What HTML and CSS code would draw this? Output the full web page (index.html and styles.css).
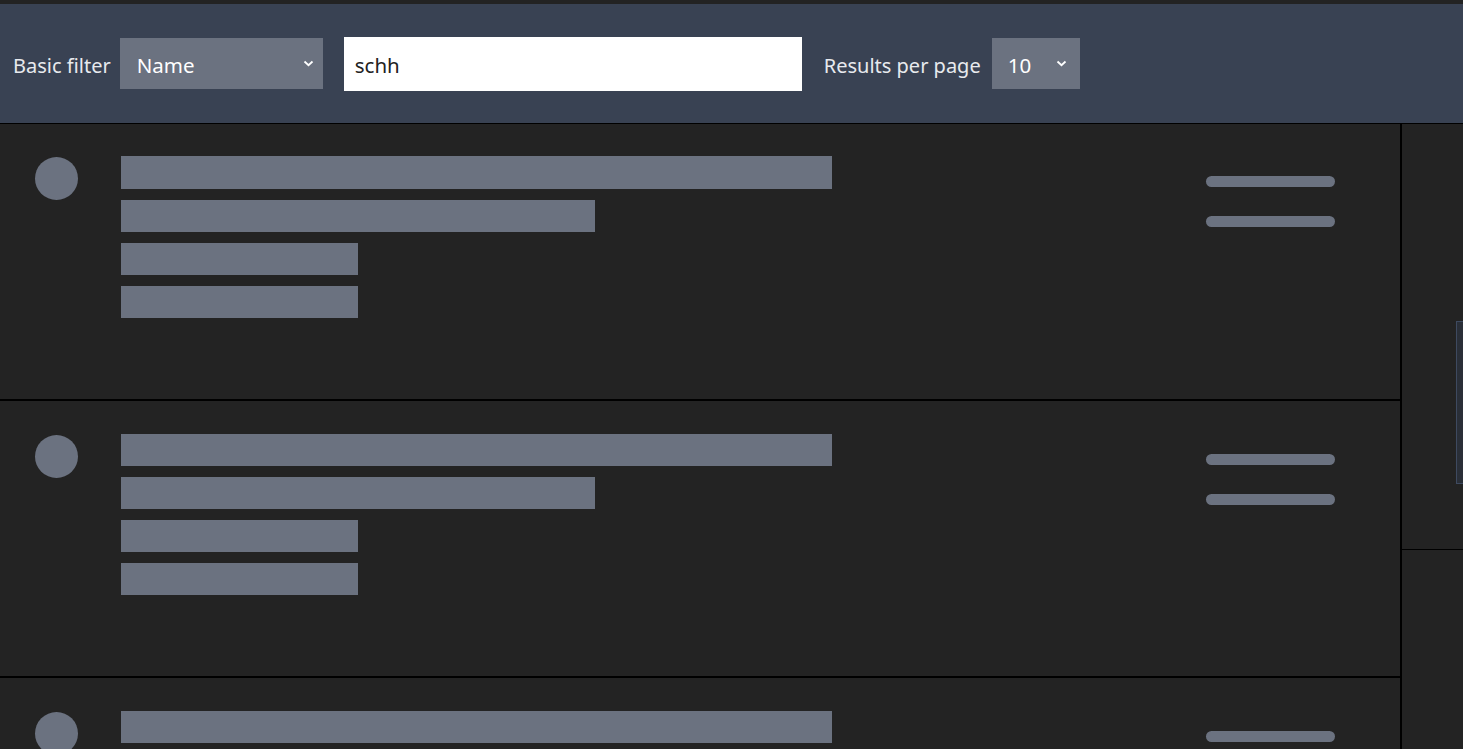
FILE: index.html
```html
<!DOCTYPE html>
<html>
<head>
<meta charset="utf-8">
<link rel="stylesheet" href="styles.css">
</head>
<body>
<div class="topstrip"></div>
<header class="filters">
  <span class="label">Basic filter</span>
  <div class="select sel-name">
    <span>Name</span>
    <svg class="chev" width="11" height="7" viewBox="0 0 11 7"><path d="M1.5 1.5 L5.5 5.2 L9.5 1.5" fill="none" stroke="#fff" stroke-width="1.8"/></svg>
  </div>
  <div class="input">schh</div>
  <span class="label">Results per page</span>
  <div class="select sel-num">
    <span>10</span>
    <svg class="chev" width="11" height="7" viewBox="0 0 11 7"><path d="M1.5 1.5 L5.5 5.2 L9.5 1.5" fill="none" stroke="#fff" stroke-width="1.8"/></svg>
  </div>
</header>
<main class="content">
  <section class="list">
    <div class="row">
      <div class="avatar"></div>
      <div class="bars">
        <div class="bar w1"></div>
        <div class="bar w2"></div>
        <div class="bar w3"></div>
        <div class="bar w3"></div>
      </div>
      <div class="pills">
        <div class="pill"></div>
        <div class="pill"></div>
      </div>
    </div>
    <div class="row">
      <div class="avatar"></div>
      <div class="bars">
        <div class="bar w1"></div>
        <div class="bar w2"></div>
        <div class="bar w3"></div>
        <div class="bar w3"></div>
      </div>
      <div class="pills">
        <div class="pill"></div>
        <div class="pill"></div>
      </div>
    </div>
    <div class="row">
      <div class="avatar"></div>
      <div class="bars">
        <div class="bar w1"></div>
        <div class="bar w2"></div>
        <div class="bar w3"></div>
        <div class="bar w3"></div>
      </div>
      <div class="pills">
        <div class="pill"></div>
        <div class="pill"></div>
      </div>
    </div>
  </section>
  <aside class="side">
    <div class="side-top"><div class="thumb"></div></div>
  </aside>
</main>
</body>
</html>
```
FILE: styles.css
```css
html, body {
  margin: 0;
  padding: 0;
  height: 100%;
  overflow: hidden;
}
body {
  background: #232323;
  font-family: "Noto Sans", "Open Sans", "Liberation Sans", sans-serif;
}
.topstrip {
  height: 4px;
  background: #232323;
}
.filters {
  height: 120px;
  box-sizing: border-box;
  background: #394253;
  border-bottom: 1px solid #000;
  display: flex;
  align-items: center;
  padding-left: 13px;
}
.label {
  color: #e8eaee;
  font-size: 20px;
  padding-top: 3px;
}
.select {
  height: 51px;
  background: #6b7280;
  color: #fff;
  font-size: 20.5px;
  display: flex;
  align-items: center;
  justify-content: space-between;
  box-sizing: border-box;
  padding: 3px 9px 0 17px;
  margin-left: 11px;
}
.sel-name { width: 203px; margin-left: 9px; }
.sel-num { width: 88px; padding-left: 16px; padding-right: 13px; }
.chev { display: block; margin-top: -4px; }
.input {
  width: 458px;
  height: 54px;
  box-sizing: border-box;
  background: #fff;
  color: #222;
  font-size: 20.5px;
  display: flex;
  align-items: center;
  padding: 3px 0 0 11px;
  margin-left: 21px;
  margin-right: 22px;
}
.content {
  display: flex;
}
.list {
  width: 1402px;
  box-sizing: border-box;
  border-right: 2px solid #000;
  flex: none;
}
.row {
  height: 277px;
  box-sizing: border-box;
  border-bottom: 2px solid #000;
  display: flex;
  align-items: flex-start;
  padding: 32px 0 0 35px;
}
.row + .row { padding-top: 33px; }
.avatar {
  width: 43px;
  height: 43px;
  border-radius: 50%;
  background: #6b7280;
  flex: none;
  margin-top: 1px;
}
.bars {
  margin-left: 43px;
  display: flex;
  flex-direction: column;
  gap: 11px;
  flex: 1;
}
.bar {
  height: 32px;
  background: #6b7280;
}
.row:first-child .bar:first-child { height: 33px; }
.w1 { width: 711px; }
.w2 { width: 474px; }
.w3 { width: 237px; }
.pills {
  width: 129px;
  margin-right: 65px;
  padding-top: 20px;
  display: flex;
  flex-direction: column;
  gap: 29px;
}
.pill {
  height: 11px;
  border-radius: 6px;
  background: #6b7280;
}
.side {
  flex: 1;
}
.side-top {
  height: 426px;
  box-sizing: border-box;
  border-bottom: 1px solid #000;
  display: flex;
  justify-content: flex-end;
  align-items: flex-start;
}
.thumb {
  width: 7px;
  height: 163px;
  margin-top: 197px;
  box-sizing: border-box;
  border: 1px solid #3e4a60;
  border-right: none;
  background: #2a2f38;
}
```
